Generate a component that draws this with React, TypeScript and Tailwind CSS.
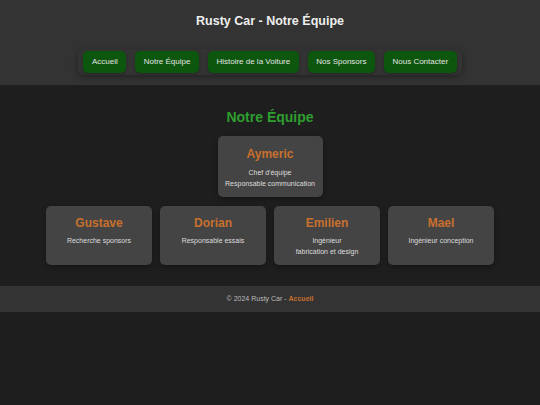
import React from "react";

const navItems = ["Accueil", "Notre Équipe", "Histoire de la Voiture", "Nos Sponsors", "Nous Contacter"];

const members = [
  { name: "Gustave", roles: ["Recherche sponsors"] },
  { name: "Dorian", roles: ["Responsable essais"] },
  { name: "Emilien", roles: ["Ingénieur", "fabrication et design"] },
  { name: "Mael", roles: ["Ingénieur conception"] },
];

function Card({ name, roles, className, gap }: { name: string; roles: string[]; className?: string; gap: string }) {
  return (
    <div className={"bg-[#444444] rounded-[5px] flex flex-col items-center shadow-[0_2px_5px_rgba(0,0,0,0.3)] " + (className ?? "")}>
      <div className="text-[#c8702e] font-bold text-[12px] leading-[16px]">{name}</div>
      <div className={"text-[#dddddd] text-[7px] leading-[11px] text-center " + gap}>
        {roles.map((r) => (
          <div key={r}>{r}</div>
        ))}
      </div>
    </div>
  );
}

export default function App() {
  return (
    <div className="w-[540px] h-[405px] bg-[#1e1e1e] font-['Liberation_Sans',Arial,sans-serif] flex flex-col">
      <header className="bg-[#333333] h-[85px] flex flex-col items-center pt-[13px]">
        <h1 className="text-[#eeeeee] font-bold text-[12.5px] leading-[17px]">Rusty Car - Notre Équipe</h1>
        <nav className="mt-[19px] flex gap-[9px] px-[5px] py-[2px] rounded-[6px] shadow-[0_2px_6px_rgba(0,0,0,0.35)]">
          {navItems.map((n) => (
            <div key={n} className="bg-[#0d560d] text-[#e4e4e4] text-[8px] h-[22px] px-[8.5px] flex items-center rounded-[5px] shadow-[0_1px_3px_rgba(0,0,0,0.3)]">
              {n}
            </div>
          ))}
        </nav>
      </header>
      <main className="flex flex-col items-center pt-[23px]">
        <h2 className="text-[#2e9e2e] font-bold text-[14px] leading-[18px]">Notre Équipe</h2>
        <Card name="Aymeric" roles={["Chef d'équipe", "Responsable communication"]} gap="mt-[5px]" className="mt-[10px] w-[105px] h-[61px] pt-[10px]" />
        <div className="mt-[9px] flex gap-[8px]">
          {members.map((m) => (
            <Card key={m.name} name={m.name} roles={m.roles} gap="mt-[4px]" className="w-[106px] h-[59px] pt-[9px]" />
          ))}
        </div>
      </main>
      <footer className="mt-[21px] bg-[#333333] h-[26px] flex items-center justify-center text-[7px] text-[#bbbbbb]">
        © 2024 Rusty Car -&nbsp;<span className="text-[#c8702e] font-bold">Accueil</span>
      </footer>
    </div>
  );
}
